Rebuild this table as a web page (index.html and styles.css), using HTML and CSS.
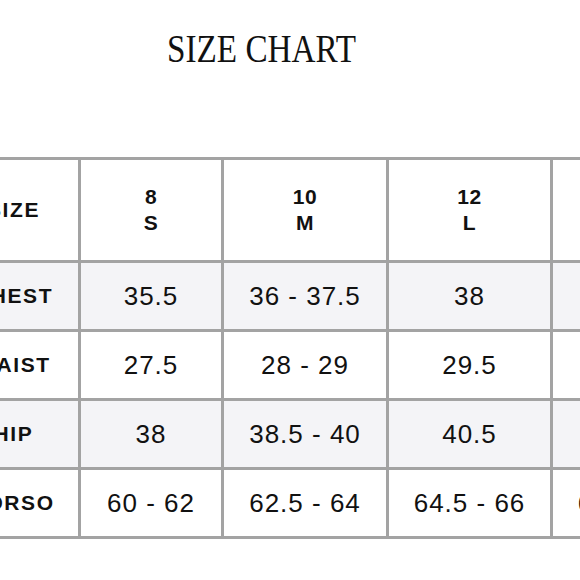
FILE: index.html
```html
<!DOCTYPE html>
<html>
<head>
<meta charset="utf-8">
<link rel="stylesheet" href="styles.css">
</head>
<body>
<div class="page">
  <h1 class="title">SIZE CHART</h1>
  <div class="chart">
    <div class="cell label">SIZE</div>
    <div class="cell head">8<br>S</div>
    <div class="cell head">10<br>M</div>
    <div class="cell head">12<br>L</div>
    <div class="cell head">14<br>XL</div>

    <div class="cell label alt">CHEST</div>
    <div class="cell val alt">35.5</div>
    <div class="cell val alt">36 - 37.5</div>
    <div class="cell val alt">38</div>
    <div class="cell val alt">40</div>

    <div class="cell label">WAIST</div>
    <div class="cell val">27.5</div>
    <div class="cell val">28 - 29</div>
    <div class="cell val">29.5</div>
    <div class="cell val">31</div>

    <div class="cell label alt">HIP</div>
    <div class="cell val alt">38</div>
    <div class="cell val alt">38.5 - 40</div>
    <div class="cell val alt">40.5</div>
    <div class="cell val alt">42</div>

    <div class="cell label">TORSO</div>
    <div class="cell val">60 - 62</div>
    <div class="cell val">62.5 - 64</div>
    <div class="cell val">64.5 - 66</div>
    <div class="cell val">66.5 - 68</div>
  </div>
</div>
</body>
</html>
```

FILE: styles.css
```css
html, body {
  margin: 0;
  padding: 0;
  background: #ffffff;
  overflow: hidden;
}

.page {
  width: 580px;
  height: 580px;
  overflow: hidden;
}

.title {
  width: 523px;
  margin: 28px 0 0 0;
  text-align: center;
  font-family: "Liberation Serif", serif;
  font-weight: normal;
  font-size: 41px;
  line-height: 41px;
  color: #111111;
  transform: scaleX(0.81);
  transform-origin: 261.5px 50%;
}

.chart {
  margin-top: 88px;
  margin-left: -45px;
  display: grid;
  grid-template-columns: 120px 140px 162px 161px 161px;
  grid-template-rows: 100px 66px 66px 66px 66px;
  gap: 3px;
  padding: 3px;
  background: #a3a3a3;
  width: max-content;
}

.cell {
  background: #ffffff;
  display: flex;
  align-items: center;
  justify-content: center;
  text-align: center;
  color: #111111;
  font-family: "Liberation Sans", Arial, sans-serif;
}

.cell.alt {
  background: #f4f4f7;
}

.label {
  font-weight: bold;
  font-size: 21px;
  letter-spacing: 1.6px;
  padding-right: 9px;
}

.head {
  font-weight: bold;
  font-size: 21px;
  line-height: 26px;
  letter-spacing: 0.5px;
}

.val {
  font-size: 26px;
  letter-spacing: 1px;
}
```
